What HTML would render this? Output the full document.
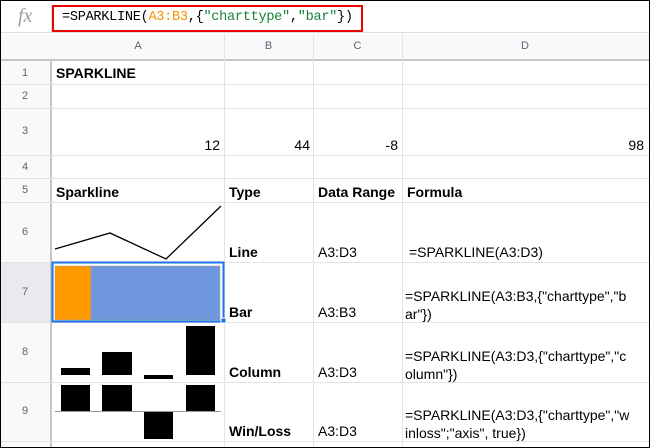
<!DOCTYPE html><html><head><style>
*{margin:0;padding:0;box-sizing:border-box}
body{width:650px;height:448px;position:relative;overflow:hidden;background:#fff;font-family:"Liberation Sans",Arial,sans-serif;color:#000}
.a{position:absolute}
.h{background:#f8f9fa;color:#5f6368;font-size:11px;text-align:center}
.n{color:#5f6368;font-size:11px;text-align:center}
.vl{position:absolute;width:1px;background:#e2e3e3}
.hl{position:absolute;height:1px;background:#e2e3e3}
.t{position:absolute;font-size:14px;line-height:16px;white-space:nowrap}
.b{font-weight:bold}
</style></head><body>
<div class="a" style="left:0;top:0;width:650px;height:33px;background:#fff;border-bottom:1px solid #dadce0"></div>
<div class="a" style="left:18px;top:5px;font-family:'Liberation Serif',serif;font-style:italic;font-size:20px;color:#9aa0a6">fx</div>
<div class="a" style="left:51px;top:3px;width:1px;height:30px;background:#e2e3e3"></div>
<div class="a" style="left:52px;top:5px;width:311px;height:27px;border:2px solid #e00"></div>
<div class="a" style="left:62px;top:10px;font-family:'Liberation Mono',monospace;font-size:13.6px;letter-spacing:-0.3px;line-height:16px;white-space:nowrap">=SPARKLINE(<span style="color:#f09300">A3:B3</span>,{<span style="color:#188038">"charttype"</span>,<span style="color:#188038">"bar"</span>})</div>
<div class="a h" style="left:0;top:34px;width:650px;height:27px;border-bottom:2px solid #c4c7c5"></div>
<div class="a n" style="left:52px;top:40px;width:172px">A</div>
<div class="a n" style="left:224px;top:40px;width:89px">B</div>
<div class="a n" style="left:313px;top:40px;width:89px">C</div>
<div class="a n" style="left:402px;top:40px;width:246px">D</div>
<div class="a h" style="left:0;top:61px;width:52px;height:387px;border-right:2px solid #c4c7c5"></div>
<div class="a" style="left:0;top:262px;width:50px;height:60px;background:#e8eaed"></div>
<div class="a n" style="left:0;top:67px;width:50px">1</div>
<div class="a n" style="left:0;top:90px;width:50px">2</div>
<div class="a n" style="left:0;top:125px;width:50px">3</div>
<div class="a n" style="left:0;top:161px;width:50px">4</div>
<div class="a n" style="left:0;top:184px;width:50px">5</div>
<div class="a n" style="left:0;top:226px;width:50px">6</div>
<div class="a n" style="left:0;top:286px;width:50px">7</div>
<div class="a n" style="left:0;top:346px;width:50px">8</div>
<div class="a n" style="left:0;top:405px;width:50px">9</div>
<div class="vl" style="left:224px;top:34px;height:414px"></div>
<div class="vl" style="left:313px;top:34px;height:414px"></div>
<div class="vl" style="left:402px;top:34px;height:414px"></div>
<div class="hl" style="left:0;top:84px;width:650px"></div>
<div class="hl" style="left:0;top:108px;width:650px"></div>
<div class="hl" style="left:0;top:155px;width:650px"></div>
<div class="hl" style="left:0;top:178px;width:650px"></div>
<div class="hl" style="left:0;top:202px;width:650px"></div>
<div class="hl" style="left:0;top:262px;width:650px"></div>
<div class="hl" style="left:0;top:322px;width:650px"></div>
<div class="hl" style="left:0;top:382px;width:650px"></div>
<div class="hl" style="left:0;top:441px;width:650px"></div>
<div class="t b" style="left:56px;top:65px">SPARKLINE</div>
<div class="t" style="left:150px;top:137px;width:70px;text-align:right">12</div>
<div class="t" style="left:240px;top:137px;width:70px;text-align:right">44</div>
<div class="t" style="left:328px;top:137px;width:70px;text-align:right">-8</div>
<div class="t" style="left:570px;top:137px;width:74px;text-align:right">98</div>
<div class="t b" style="left:56px;top:184px">Sparkline</div>
<div class="t b" style="left:229px;top:184px">Type</div>
<div class="t b" style="left:318px;top:184px">Data Range</div>
<div class="t b" style="left:407px;top:184px">Formula</div>
<div class="t b" style="left:229px;top:244px">Line</div>
<div class="t" style="left:318px;top:244px">A3:D3</div>
<div class="t" style="left:409px;top:244px">=SPARKLINE(A3:D3)</div>
<div class="t b" style="left:229px;top:304px">Bar</div>
<div class="t" style="left:318px;top:304px">A3:B3</div>
<div class="t" style="left:405px;top:287px;line-height:18px">=SPARKLINE(A3:B3,{"charttype","b<br>ar"})</div>
<div class="t b" style="left:229px;top:364px">Column</div>
<div class="t" style="left:318px;top:364px">A3:D3</div>
<div class="t" style="left:405px;top:347px;line-height:18px">=SPARKLINE(A3:D3,{"charttype","c<br>olumn"})</div>
<div class="t b" style="left:229px;top:423px">Win/Loss</div>
<div class="t" style="left:318px;top:423px">A3:D3</div>
<div class="t" style="left:405px;top:406px;line-height:18px">=SPARKLINE(A3:D3,{"charttype","w<br>inloss";"axis", true})</div>
<svg class="a" style="left:0;top:0" width="650" height="448">
<polyline points="55,249 110,233 166,259 221,206" fill="none" stroke="#000" stroke-width="1.3"/>
<rect x="55" y="266" width="36" height="54" fill="#ff9900" stroke="#a0a0a0" stroke-width=".5"/>
<rect x="91" y="266" width="129" height="54" fill="#6f97dd" stroke="#a0a0a0" stroke-width=".5"/>
<rect x="52.5" y="262.5" width="171" height="59" fill="none" stroke="#1a73e8" stroke-width="2"/>
<rect x="221" y="318" width="5" height="5" fill="#1a73e8" stroke="#fff" stroke-width="1"/>
<rect x="61" y="368" width="29" height="7" fill="#000"/>
<rect x="102" y="352" width="30" height="23" fill="#000"/>
<rect x="144" y="375" width="29" height="4" fill="#000"/>
<rect x="186" y="326" width="29" height="49" fill="#000"/>
<rect x="61" y="385" width="29" height="26" fill="#000"/>
<rect x="102" y="385" width="30" height="26" fill="#000"/>
<rect x="144" y="412" width="29" height="27" fill="#000"/>
<rect x="186" y="385" width="29" height="26" fill="#000"/>
<line x1="55" y1="411.5" x2="221" y2="411.5" stroke="#999" stroke-width="1"/>
</svg>
<div class="a" style="left:0;top:0;width:650px;height:448px;border:1px solid #000"></div>
</body></html>
